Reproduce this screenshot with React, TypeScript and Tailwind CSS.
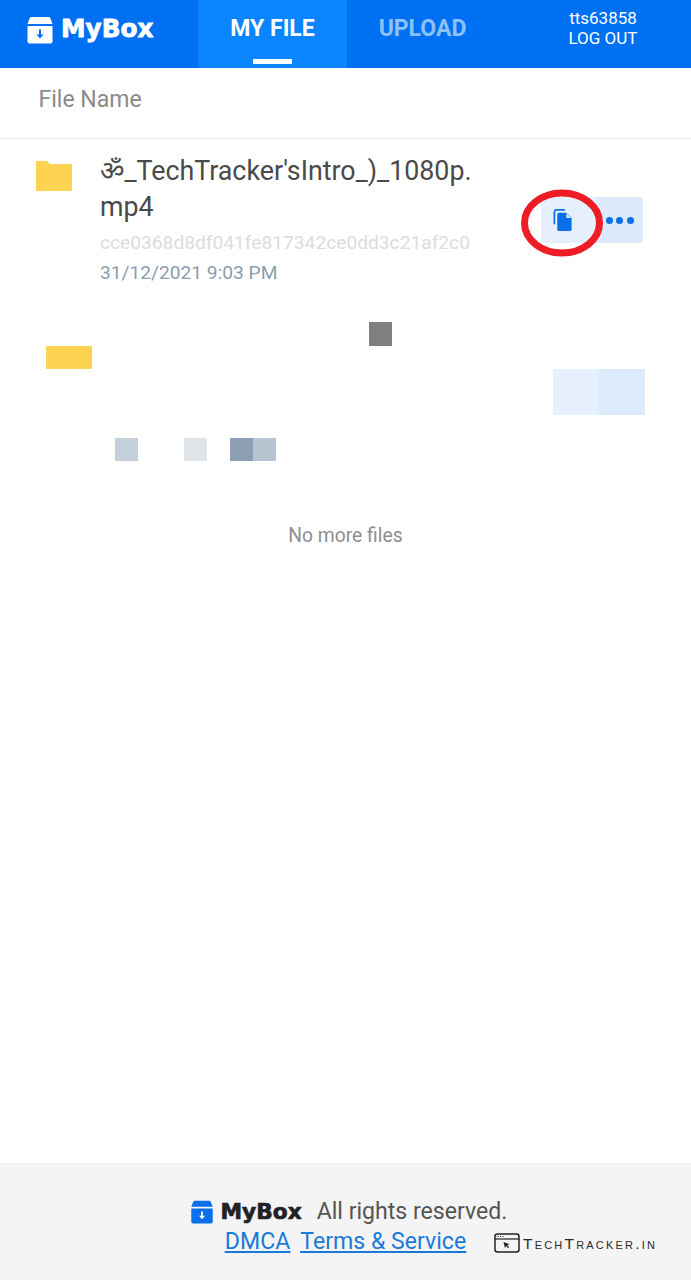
const roboto = { fontFamily: "Roboto, 'Noto Sans', sans-serif" };

function BoxLogo({ className, lid, body }: { className: string; lid: string; body: string }) {
  return (
    <svg viewBox="0 0 28 28" className={className}>
      <path d="M5.5 1h17a2 2 0 0 1 1.8 1.2L26.5 8h-25l2.2-5.8A2 2 0 0 1 5.5 1z" fill={lid} />
      <path d="M1.5 10h25v15.5a2 2 0 0 1-2 2h-21a2 2 0 0 1-2-2z" fill={lid} />
      <path d="M13 13.5h2v5h2.6L14 22.5l-3.6-4H13z" fill={body} />
    </svg>
  );
}

function Folder({ className }: { className: string }) {
  return (
    <svg viewBox="0 0 36 30" className={className}>
      <path d="M0 0h11l3 3h22v27H0z" fill="#fdd451" />
    </svg>
  );
}

function CopyIcon() {
  return (
    <svg viewBox="0 0 20 24" className="h-[23px] w-[20px]">
      <path d="M1 16V3a2 2 0 0 1 2-2h9" fill="none" stroke="#0a6fe8" strokeWidth="1.800" />
      <path d="M6 4h7.500L19 9.500V21a2 2 0 0 1-2 2H6a2 2 0 0 1-2-2V6a2 2 0 0 1 2-2z" fill="#0a6fe8" />
      <path d="M13.500 4.500V9.500H18.500z" fill="#dbe9fb" />
    </svg>
  );
}

export default function App() {
  return (
    <div className="flex h-[1280px] w-[691px] flex-col overflow-hidden bg-white" style={roboto}>
      <header className="flex h-[68px] shrink-0 bg-[#0070f3] text-white">
        <div className="flex w-[198px] items-center pb-[9px] pl-[26px]">
          <BoxLogo className="h-[28px] w-[28px]" lid="#ffffff" body="#0070f3" />
          <span className="ml-[7px] text-[24.700px] font-bold leading-none [font-family:'DejaVu_Sans',sans-serif] [-webkit-text-stroke:0.8px_white]">
            MyBox
          </span>
        </div>
        <div className="relative flex w-[149px] items-center justify-center bg-[#0a84ff] pb-[9px] text-[23px] font-bold">
          MY FILE
          <span className="absolute bottom-[4px] left-[55px] h-[5px] w-[39px] bg-white" />
        </div>
        <div className="flex w-[151px] items-center justify-center pb-[9px] text-[23px] font-bold text-[#8cc2f9]">
          UPLOAD
        </div>
        <div className="flex flex-1 flex-col items-center justify-center pb-[12px] pl-[17px] text-[17px] leading-[20px]">
          <span>tts63858</span>
          <span>LOG OUT</span>
        </div>
      </header>

      <div className="flex h-[71px] shrink-0 items-center border-b border-[#ececec] pb-[6px] pl-[38.500px] text-[23px] text-[#8a8a8a]">
        File Name
      </div>

      <main className="flex-1">
        <div className="relative flex pl-[36px] pr-[48px] pt-[14px]">
          <Folder className="mt-[8px] h-[30px] w-[36px] shrink-0" />
          <div className="ml-[28px] w-[380px]">
            <div className="text-[26.800px] leading-[36px] text-[#4a4a4a]">
              <div style={{ fontFamily: "Roboto, 'DejaVu Sans', 'Noto Sans', sans-serif" }}>ॐ_TechTracker'sIntro_)_1080p.</div>
              <div>mp4</div>
            </div>
            <div className="mt-[3px] text-[19.200px] leading-[30px] text-[#dcdcdc]">cce0368d8df041fe817342ce0dd3c21af2c0</div>
            <div className="text-[19.200px] leading-[30px] text-[#8b9db0]">31/12/2021 9:03 PM</div>
          </div>
          <div className="ml-auto mt-[44px] flex h-[46px] self-start">
            <button className="flex w-[56px] items-center justify-center rounded-l-[4px] bg-[#e6f0fc] pr-[12px]">
              <CopyIcon />
            </button>
            <button className="flex w-[46px] items-center justify-center gap-[3.500px] rounded-r-[4px] bg-[#dbe9fb] pr-[1px]">
              <span className="h-[7px] w-[7px] rounded-full bg-[#0a6fe8]" />
              <span className="h-[7px] w-[7px] rounded-full bg-[#0a6fe8]" />
              <span className="h-[7px] w-[7px] rounded-full bg-[#0a6fe8]" />
            </button>
          </div>
          <svg viewBox="0 0 82 68" className="absolute left-[521px] top-[50px] h-[68px] w-[82px]">
            <ellipse cx="41" cy="34" rx="37.500" ry="30" fill="none" stroke="#ee1c25" strokeWidth="7" />
          </svg>
        </div>

        {/* mosaic-censored second entry */}
        <div className="mt-[34px] flex pl-[46px] pr-[46px]">
          <div className="mt-[24px] h-[23px] w-[46px] shrink-0 bg-[#fed351]" />
          <div className="flex flex-1 flex-col">
            <div className="ml-[277px] h-[24px] w-[23px] bg-[#808080]" />
            <div className="ml-[23px] mt-[92px] flex h-[23px]">
              <div className="w-[23px] bg-[#c6d0dc]" />
              <div className="ml-[46px] w-[23px] bg-[#e0e5ea]" />
              <div className="ml-[23px] w-[23px] bg-[#8c9eb6]" />
              <div className="w-[23px] bg-[#b8c4d2]" />
            </div>
          </div>
          <div className="mt-[47px] flex h-[46px]">
            <div className="w-[46px] bg-[#e6f0fc]" />
            <div className="w-[46px] bg-[#dcebfc]" />
          </div>
        </div>

        <p className="mt-[63px] text-center text-[19.300px] leading-[24px] text-[#8f8f8f]">No more files</p>
      </main>

      <footer className="relative flex h-[117px] shrink-0 flex-col items-center bg-[#f4f4f4] pt-[34px]">
        <div className="flex h-[30px] items-center pl-[6px]">
          <BoxLogo className="h-[24px] w-[24px]" lid="#0a6fe8" body="#ffffff" />
          <span className="ml-[7px] text-[21.700px] font-bold leading-none text-[#222222] [font-family:'DejaVu_Sans',sans-serif] [-webkit-text-stroke:0.7px_#222222]">
            MyBox
          </span>
          <span className="ml-[15px] text-[23.100px] text-[#555555]">All rights reserved.</span>
        </div>
        <div className="flex gap-[10px] text-[23.100px] leading-[30px] text-[#1a7ad9] underline">
          <a>DMCA</a>
          <a>Terms &amp; Service</a>
        </div>
        <div className="absolute left-[494px] top-[70px] flex items-center">
          <svg viewBox="0 0 26 20" className="h-[20px] w-[26px]">
            <rect x="1" y="1" width="24" height="18" rx="2.500" fill="none" stroke="#222222" strokeWidth="1.500" />
            <path d="M1 6h24" stroke="#222222" strokeWidth="1.200" />
            <path d="M3.500 3.500h1M6 3.500h1M8.500 3.500h1" stroke="#222222" strokeWidth="1" />
            <path d="M9.500 9l6 2.200-2.300 1 2 2.300-1 .8-2-2.300-1.200 2z" fill="#222222" />
          </svg>
          <span className="ml-[3px] mt-[2px] text-[15.500px] leading-none tracking-[2.200px] text-[#2a2a2a] [font-family:'Liberation_Sans',sans-serif] [font-variant:small-caps]">
            TechTracker.in
          </span>
        </div>
      </footer>
    </div>
  );
}
